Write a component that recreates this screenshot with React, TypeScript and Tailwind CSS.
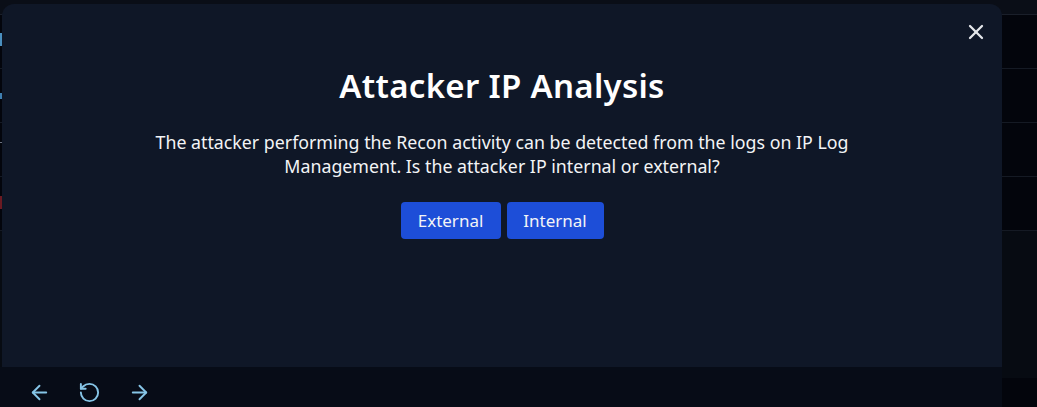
import { ArrowLeft, ArrowRight, RotateCcw, X } from "lucide-react";

const ROWS = [0, 1, 2, 3];

export default function App() {
  return (
    <div className="relative h-[407px] w-[1037px] overflow-hidden bg-[#070b12] font-['Noto_Sans',sans-serif]">
      {/* page underneath the dialog */}
      <div className="flex h-full flex-col">
        <div className="h-[15px] border-b border-[#1a1f2a] bg-[#0a0e17]" />
        {ROWS.map((r) => (
          <div key={r} className="h-[54px] border-b border-[#151a24] bg-[#03050c]" />
        ))}
        <div className="flex-1 bg-[#070b12]" />
        <div className="h-[29px] bg-[#03050c]" />
      </div>

      {/* left edge marks peeking out */}
      <div className="absolute left-0 top-[33px] h-[13px] w-[2px] bg-[#4a8fbf]" />
      <div className="absolute left-0 top-[93px] h-[6px] w-[2px] bg-[#3f7fb0]" />
      <div className="absolute left-0 top-[142px] h-px w-[2px] bg-[#6b7280]" />
      <div className="absolute left-0 top-[196px] h-[13px] w-[2px] bg-[#6b1a22]" />

      {/* dialog */}
      <div className="absolute left-0 top-[4px] flex h-[403px] w-[1002px] flex-col">
        <div className="relative ml-[2px] flex flex-1 flex-col items-center rounded-t-xl bg-[#0f1727] pt-[58px] text-white">
          <button className="absolute right-[14px] top-[16px] text-[#e5e7eb]">
            <X size={24} strokeWidth={2.25} />
          </button>
          <h2 className="text-[33px] font-semibold leading-[48px] tracking-[0.3px]">
            Attacker IP Analysis
          </h2>
          <p className="mt-[20px] max-w-[740px] text-center text-[17.8px] leading-[24px] text-[#f3f4f6]">
            The attacker performing the Recon activity can be detected from the logs on IP Log
            Management. Is the attacker IP internal or external?
          </p>
          <div className="mt-[24px] flex gap-[6px]">
            <button className="h-[37px] w-[100px] rounded-[4px] bg-[#1d4ed8] text-[17px] text-[#f3f4f6]">
              External
            </button>
            <button className="h-[37px] w-[97px] rounded-[4px] bg-[#1d4ed8] text-[17px] text-[#f3f4f6]">
              Internal
            </button>
          </div>
        </div>
        <div className="flex h-[40px] items-center gap-[27px] bg-[#070c17] pl-[28px] pt-[10px] text-[#86c5e7]">
          <ArrowLeft size={23} strokeWidth={2} />
          <RotateCcw size={23} strokeWidth={2} />
          <ArrowRight size={23} strokeWidth={2} />
        </div>
      </div>
    </div>
  );
}
